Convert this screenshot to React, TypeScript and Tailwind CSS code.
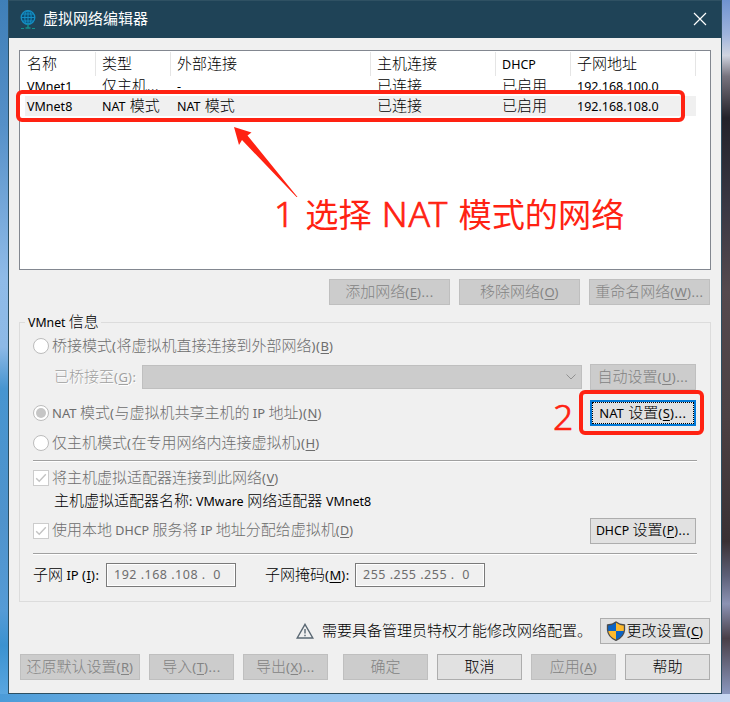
import React from 'react';

const CJK = /([\u3000-\u303f\u4e00-\u9fff]+)/;

/** Mixed text: Chinese runs and Latin runs have their own size; "_x" underlines x. */
function T({ children, className = '', latin = 'text-[13px]', cjk = 'text-[15px] font-light' }: { children: string; className?: string; latin?: string; cjk?: string }) {
  return (
    <span className={`inline-block whitespace-pre leading-5 ${className}`}>
      {children.split(CJK).map((run, i) =>
        i % 2 ? (
          <span key={i} className={`font-['Noto_Sans_CJK_SC',sans-serif] ${cjk}`}>{run}</span>
        ) : (
          <span key={i} className={`font-['Noto_Sans',sans-serif] ${latin}`}>
            {run.split(/(_.|[()]+|\.\.\.)/).map((p, j) => {
              if (p[0] === '_') return <u key={j} className="underline-offset-2">{p[1]}</u>;
              if (j % 2) return <span key={j} className="tracking-[0.6px]">{p}</span>;
              return p;
            })}
          </span>
        ),
      )}
    </span>
  );
}

function Btn({ label, w, disabled, icon, className = '', latin }: { label: string; w: string; disabled?: boolean; icon?: React.ReactNode; className?: string; latin?: string }) {
  const look = disabled ? 'border-[#bfbfbf] bg-[#cccccc] text-[#838383]' : 'border-[#adadad] bg-[#e1e1e1] text-black';
  return (
    <button className={`flex h-[26px] shrink-0 items-center justify-center border ${look} ${w} ${className}`}>
      {icon}
      <T className="-translate-y-px" latin={latin}>{label}</T>
    </button>
  );
}

function Radio({ label, on }: { label: string; on?: boolean }) {
  return (
    <label className="flex items-center gap-[3px] text-[#6d6d6d]">
      <span className="flex size-4 items-center justify-center rounded-full border border-[#bcbcbc] bg-white">
        {on && <span className="size-2.5 rounded-full bg-[#c6c6c6]" />}
      </span>
      <T className="-translate-y-px">{label}</T>
    </label>
  );
}

function Check({ label, latin }: { label: string; latin?: string }) {
  return (
    <label className="flex items-center gap-[3px] text-[#6d6d6d]">
      <svg viewBox="0 0 16 16" className="size-4 border border-[#cccccc] bg-white">
        <path d="M2.5 8.2 6 11.8 13.5 3.8" fill="none" stroke="#c3c3c3" strokeWidth="1.6" />
      </svg>
      <T className="-translate-y-px" latin={latin}>{label}</T>
    </label>
  );
}

const Rule = ({ className }: { className: string }) => <div className={`h-[2px] w-[664px] shrink-0 border-b border-t border-b-white border-t-[#a0a0a0] ${className}`} />;

function IpBox({ parts }: { parts: string }) {
  return (
    <div className="h-6 w-[130px] border border-[#7a7a7a] bg-[#f0f0f0] pl-[7px] font-['Noto_Sans',sans-serif] text-[12.5px] leading-[22px] tracking-[0.5px] whitespace-pre text-[#6d6d6d] ring-1 ring-inset ring-white">
      {parts}
    </div>
  );
}

const cols = ['w-[75px]', 'w-[75px]', 'w-[200px]', 'w-[125px]', 'w-[75px]', 'w-[125px]'];
const head = ['名称', '类型', '外部连接', '主机连接', 'DHCP', '子网地址'];
const rows = [
  ['VMnet1', '仅主机...', '-', '已连接', '已启用', '192.168.100.0'],
  ['VMnet8', 'NAT 模式', 'NAT 模式', '已连接', '已启用', '192.168.108.0'],
];

function Globe() {
  return (
    <svg viewBox="0 0 16 20" className="h-5 w-4" fill="none">
      <circle cx="8" cy="7.5" r="6.8" fill="#0b4a70" stroke="#148fc4" strokeWidth="1.3" />
      <ellipse cx="8" cy="7.5" rx="3.2" ry="6.8" stroke="#148fc4" strokeWidth="1.1" />
      <path d="M8 1v13M1 7.5h14M2.4 4h11.2M2.4 11h11.2" stroke="#148fc4" />
      <path d="M8 14v4M5.5 18h5" stroke="#148f8c" strokeWidth="1.4" />
      <path d="M1 18.5h3M12 18.5h3" stroke="#148f8c" />
    </svg>
  );
}

function Shield() {
  return (
    <svg viewBox="0 0 20 20" className="size-5 shrink-0">
      <clipPath id="shield"><path d="M10 1Q13 3.5 18.5 4V9Q18 16 10 19.3 2 16 1.5 9V4Q7 3.5 10 1Z" /></clipPath>
      <g clipPath="url(#shield)">
        <path d="M0 0h10v10H0zM10 10h10v10H10z" fill="#0b63c4" />
        <path d="M10 0h10v10H10zM0 10h10v10H0z" fill="#fdb92c" />
      </g>
      <path d="M10 1Q13 3.5 18.5 4V9Q18 16 10 19.3 2 16 1.5 9V4Q7 3.5 10 1Z" fill="none" stroke="#4c4c4c" strokeWidth="1.3" />
    </svg>
  );
}

export default function App() {
  return (
    <div className="relative flex h-[702px] w-[730px] flex-col overflow-hidden bg-[linear-gradient(90deg,#4b9bd8,#8fc3ee_35%,#a9cbee_65%,#c9d8f2)]">
      <div className="flex h-[694px]">
        <div className="w-2 bg-[linear-gradient(180deg,#3f7fb8,#5590c8_18%,#8fbbe8_40%,#8db9e6_50%,#4795d0_56%,#4f93cc_75%,#559bd6_88%,#3b92d0_93%,#5aa6e0)]" />
        <div className="flex w-[714px] flex-col border-x border-b border-[#2c4f62] bg-[#f0f0f0]">
          <header className="flex h-[38px] shrink-0 items-center border-t border-[#2f5163] bg-[#1f4357] pl-[11px] pr-[14px] text-white">
            <Globe />
            <T className="ml-[7px] grow -translate-y-px" cjk="text-[15px] font-normal">虚拟网络编辑器</T>
            <svg viewBox="0 0 14 14" className="size-3.5 -translate-y-px"><path d="M1 1 13 13M13 1 1 13" stroke="#fff" strokeWidth="1.2" /></svg>
          </header>

          <main className="flex flex-col pl-[10px] pt-3">
            <section className="h-[220px] w-[692px] border border-[#828790] bg-white">
              <div className="flex h-[25px] text-black">
                {head.map((h, i) => (
                  <div key={h} className={`mt-px h-6 border-r border-[#e5e5e5] ${i ? `pl-[6px] ${cols[i]}` : 'w-[76px] pl-[7px]'}`}><T className="-translate-y-px" latin="text-[12.5px]">{h}</T></div>
                ))}
              </div>
              {rows.map((r, n) => (
                <div key={n} className={`ml-[5px] flex h-5 w-[671px] items-center text-black ${n ? 'bg-[#f0f0f0]' : ''}`}>
                  {r.map((c, i) => (
                    <div key={i} className={`flex h-5 items-center ${i ? `pl-[6px] ${cols[i]}` : 'w-[71px] pl-[2px]'}`}><T latin="text-[12.5px] [word-spacing:1px]">{c}</T></div>
                  ))}
                </div>
              ))}
            </section>

            <div className="mt-[9px] flex w-[691px] justify-end gap-[9px]">
              <Btn disabled w="w-[121px]" label="添加网络(_E)..." />
              <Btn disabled w="w-[121px]" label="移除网络(_O)" />
              <Btn disabled w="w-[121px]" label="重命名网络(_W)..." />
            </div>

            <fieldset className="mt-[7px] flex h-[290px] w-[692px] flex-col">
              <div className="flex h-5 shrink-0 items-center">
                <span className="h-px w-[6px] bg-[#dcdcdc]" />
                <T className="pl-[3px] pr-[2px] text-black" latin="text-[12.3px]">VMnet 信息</T>
                <span className="h-px grow bg-[#dcdcdc]" />
              </div>
              <div className="-mt-[10px] flex h-[280px] flex-col border-x border-b border-[#dcdcdc] pl-[13px]">
                <div className="mt-[11px] flex h-[26px] shrink-0 items-center"><Radio label="桥接模式(将虚拟机直接连接到外部网络)(_B)" /></div>
                <div className="mt-[5px] flex h-[26px] w-[663px] shrink-0 items-center">
                  <T className="w-[109px] -translate-y-px pl-[21px] text-[#a0a0a0] [text-shadow:1px_1px_0_#fff]">已桥接至(_G):</T>
                  <div className="flex h-6 w-[440px] items-center justify-end border border-[#bfbfbf] bg-[#cccccc] pr-[5px]">
                    <svg viewBox="0 0 10 6" className="h-1.5 w-2.5"><path d="M.5.5 5 5 9.5.5" fill="none" stroke="#919191" /></svg>
                  </div>
                  <Btn disabled w="w-[106px]" className="ml-2" label="自动设置(_U)..." />
                </div>
                <div className="mt-[10px] flex h-[26px] w-[663px] shrink-0 items-center justify-between">
                  <Radio on label="NAT 模式(与虚拟机共享主机的 IP 地址)(_N)" />
                  <button className="flex h-[26px] w-[106px] items-center justify-center border-2 border-[#0078d7] bg-[#e1e1e1]">
                    <span className="flex h-[22px] w-full items-center justify-center border border-dotted border-black"><T className="-translate-y-px" latin="text-[13px] [word-spacing:1px]">NAT 设置(_S)...</T></span>
                  </button>
                </div>
                <div className="mt-1 flex h-[26px] shrink-0 items-center"><Radio label="仅主机模式(在专用网络内连接虚拟机)(_H)" /></div>
                <Rule className="mt-1" />
                <div className="mt-2 flex h-4 shrink-0 items-center"><Check label="将主机虚拟适配器连接到此网络(_V)" /></div>
                <div className="mt-[5px] flex h-5 shrink-0 items-center pl-[21px] text-black"><T latin="text-[12.5px] [word-spacing:0.4px]">主机虚拟适配器名称: VMware 网络适配器 VMnet8</T></div>
                <div className="mt-[7px] flex h-[26px] w-[663px] shrink-0 items-center justify-between">
                  <Check latin="text-[12.5px]" label="使用本地 DHCP 服务将 IP 地址分配给虚拟机(_D)" />
                  <Btn w="w-[106px]" latin="text-[12.3px]" label="DHCP 设置(_P)..." />
                </div>
                <Rule className="mt-[9px]" />
                <div className="mt-2 flex h-6 shrink-0 items-center text-black">
                  <T className="w-[73px] -translate-y-px">子网 IP (_I):</T>
                  <IpBox parts="192 .168 .108 .  0" />
                  <T className="ml-[29px] w-[90px] -translate-y-px">子网掩码(_M):</T>
                  <IpBox parts="255 .255 .255 .  0" />
                </div>
              </div>
            </fieldset>

            <div className="mt-4 flex h-[26px] w-[691px] items-center justify-end text-black">
              <svg viewBox="0 0 18 16" className="h-4 w-[18px]" fill="none" stroke="#5a6873" strokeWidth="1.4"><path d="M9 1.3 16.8 15H1.2ZM9 6v4.6M9 11.8v1.4" /></svg>
              <T className="ml-[8px] w-[278px] -translate-y-px">需要具备管理员特权才能修改网络配置。</T>
              <Btn w="w-[110px]" label="更改设置(_C)" icon={<Shield />} />
            </div>

            <div className="mt-[10px] flex gap-[9px] pl-px">
              <Btn disabled w="w-[120px]" label="还原默认设置(_R)" />
              <Btn disabled w="w-[85px]" label="导入(_T)..." />
              <Btn disabled w="w-[85px]" label="导出(_X)..." />
              <Btn disabled w="w-[85px]" className="ml-[6px]" label="确定" />
              <Btn w="w-[85px]" label="取消" />
              <Btn disabled w="w-[85px]" label="应用(_A)" />
              <Btn w="w-[85px]" label="帮助" />
            </div>
          </main>
        </div>
        <div className="w-2 bg-[linear-gradient(180deg,#6f93d0,#9fb4dc_5%,#d0d4e0_8%,#77737e_11%,#23222a_17%,#3a3844_30%,#55494e_42%,#4c4144_60%,#3a3033_78%,#5d6078_83%,#8c93b4_87%,#493f48_92%,#8b98bf)]" />
      </div>

      <div className="absolute left-4 top-[90px] h-8 w-[669px] rounded-md border-4 border-[#ff2212]" />
      <div className="absolute left-[579px] top-[390px] h-[45px] w-[125px] rounded-md border-4 border-[#ff2212]" />
      <svg viewBox="0 0 70 75" className="absolute left-[230px] top-[124px] h-[75px] w-[70px]"><path d="M4 3 21.5 8.5 17.5 11.5 67.5 73 66.5 73 12 16 9 21Z" fill="#ff2212" /></svg>
      <T className="absolute left-[274px] top-[203px] text-[#ff2212]" latin="text-[35.5px] font-light tracking-[0.9px] [-webkit-text-stroke:0.7px_#ff2212]" cjk="text-[33.2px] font-normal">1 选择 NAT 模式的网络</T>
      <T className="absolute left-[553px] top-[406px] text-[#ff2212]" latin="text-[35.5px] font-light [-webkit-text-stroke:0.7px_#ff2212]">2</T>
    </div>
  );
}
